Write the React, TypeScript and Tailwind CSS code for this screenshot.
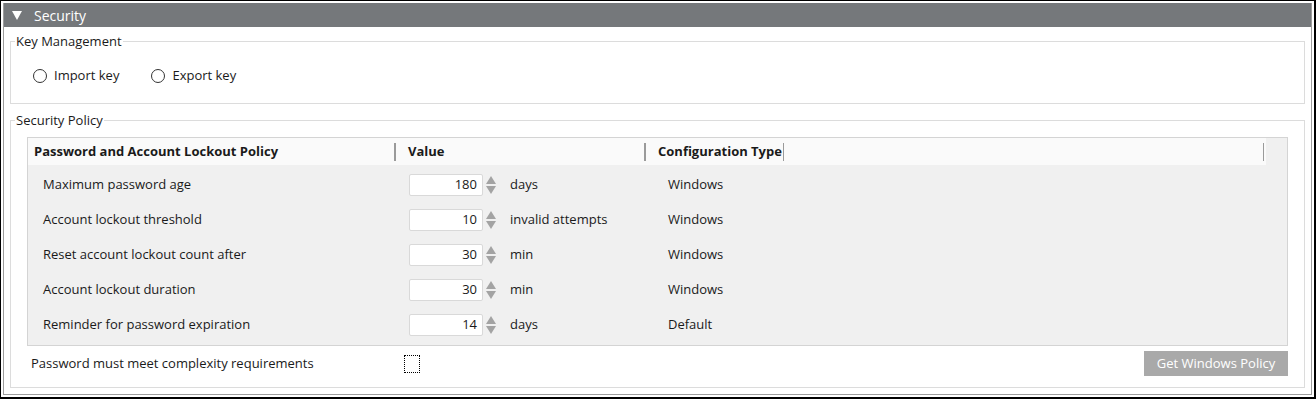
import React from 'react';

interface PolicyRow {
  label: string;
  value: number;
  unit: string;
  config: string;
}

const rows: PolicyRow[] = [
  { label: 'Maximum password age', value: 180, unit: 'days', config: 'Windows' },
  { label: 'Account lockout threshold', value: 10, unit: 'invalid attempts', config: 'Windows' },
  { label: 'Reset account lockout count after', value: 30, unit: 'min', config: 'Windows' },
  { label: 'Account lockout duration', value: 30, unit: 'min', config: 'Windows' },
  { label: 'Reminder for password expiration', value: 14, unit: 'days', config: 'Default' },
];

const Radio: React.FC<{ label: string }> = ({ label }) => (
  <label className="flex items-center gap-[7px]">
    <span className="w-[14px] h-[14px] rounded-full border border-[#333] bg-white" />
    <span>{label}</span>
  </label>
);

const Spinner: React.FC = () => (
  <svg width="12" height="20" viewBox="0 0 12 20" className="ml-[2px]">
    <polygon points="6,1 11,9 1,9" fill="#a3a3a3" />
    <polygon points="1,11 11,11 6,19" fill="#a3a3a3" />
  </svg>
);

const Separator: React.FC = () => (
  <span className="w-[2px] h-[18px] bg-[#9a9a9a]" />
);

const App: React.FC = () => {
  return (
    <div className="w-[1316px] h-[399px] bg-white border border-black border-r-2 border-b-2 p-[2px] font-['Open_Sans',sans-serif] text-[13px] text-[#1a1a1a]">
      <div className="h-full flex flex-col border-x border-b border-[#9d9d9d]">
        {/* Header */}
        <div className="h-[24px] shrink-0 bg-[#75787b] text-white flex items-center pl-[8px]">
          <svg width="10" height="9" viewBox="0 0 10 9" className="mr-[12px]">
            <polygon points="0,0 10,0 5,9" fill="#ffffff" />
          </svg>
          <span className="text-[14px]">Security</span>
        </div>

        <div className="flex-1 flex flex-col px-[6px] pt-[6px] pb-[6px] gap-[8px]">
          {/* Key Management */}
          <fieldset className="border border-[#dcdcdc] h-[71px] px-[4px]">
            <legend className="px-[1px] leading-[16px]">Key Management</legend>
            <div className="flex items-center gap-[32px] pl-[18px] pt-[17px]">
              <Radio label="Import key" />
              <Radio label="Export key" />
            </div>
          </fieldset>

          {/* Security Policy */}
          <fieldset className="flex-1 border border-[#dcdcdc] px-[6px]">
            <legend className="ml-[-2px] px-[1px] leading-[16px]">Security Policy</legend>
            <div className="flex flex-col">
              <div className="mx-[10px] mt-[9px] border border-[#d4d4d4] bg-[#f0f0f0] pb-[3px]">
                {/* Column header */}
                <div className="mr-[21px] h-[27px] bg-[#fafafa] flex items-center font-bold">
                  <div className="w-[368px] flex items-center justify-between pl-[6px]">
                    <span>Password and Account Lockout Policy</span>
                    <Separator />
                  </div>
                  <div className="w-[250px] flex items-center justify-between pl-[12px]">
                    <span>Value</span>
                    <Separator />
                  </div>
                  <div className="flex-1 flex items-center pl-[12px]">
                    <span>Configuration Type</span>
                    <span className="w-[1px] h-[18px] bg-[#9a9a9a] ml-[1px]" />
                    <span className="flex-1" />
                    <span className="w-[1px] h-[18px] bg-[#9a9a9a] mr-[2px]" />
                  </div>
                </div>
                {/* Rows */}
                <div className="pt-[2px]">
                  {rows.map((row) => (
                    <div key={row.label} className="h-[35px] flex items-center">
                      <div className="w-[368px] pl-[15px]">{row.label}</div>
                      <div className="w-[250px] flex items-center pl-[13px]">
                        <div className="w-[74px] h-[22px] bg-white border border-[#d9d9d9] rounded-[2px] flex items-center justify-end pr-[5px]">
                          {row.value}
                        </div>
                        <Spinner />
                        <span className="ml-[13px]">{row.unit}</span>
                      </div>
                      <div className="flex-1 pl-[22px]">{row.config}</div>
                    </div>
                  ))}
                </div>
              </div>

              {/* Complexity + button */}
              <div className="flex items-center h-[29px] mt-[3px] pl-[14px] pr-[10px]">
                <span className="w-[373px]">Password must meet complexity requirements</span>
                <span className="w-[16px] h-[18px] border border-dotted border-black bg-white" />
                <span className="flex-1" />
                <button className="w-[144px] h-[25px] bg-[#a9a9a9] text-white text-[13px]">
                  Get Windows Policy
                </button>
              </div>
            </div>
          </fieldset>
        </div>
      </div>
    </div>
  );
};

export default App;
